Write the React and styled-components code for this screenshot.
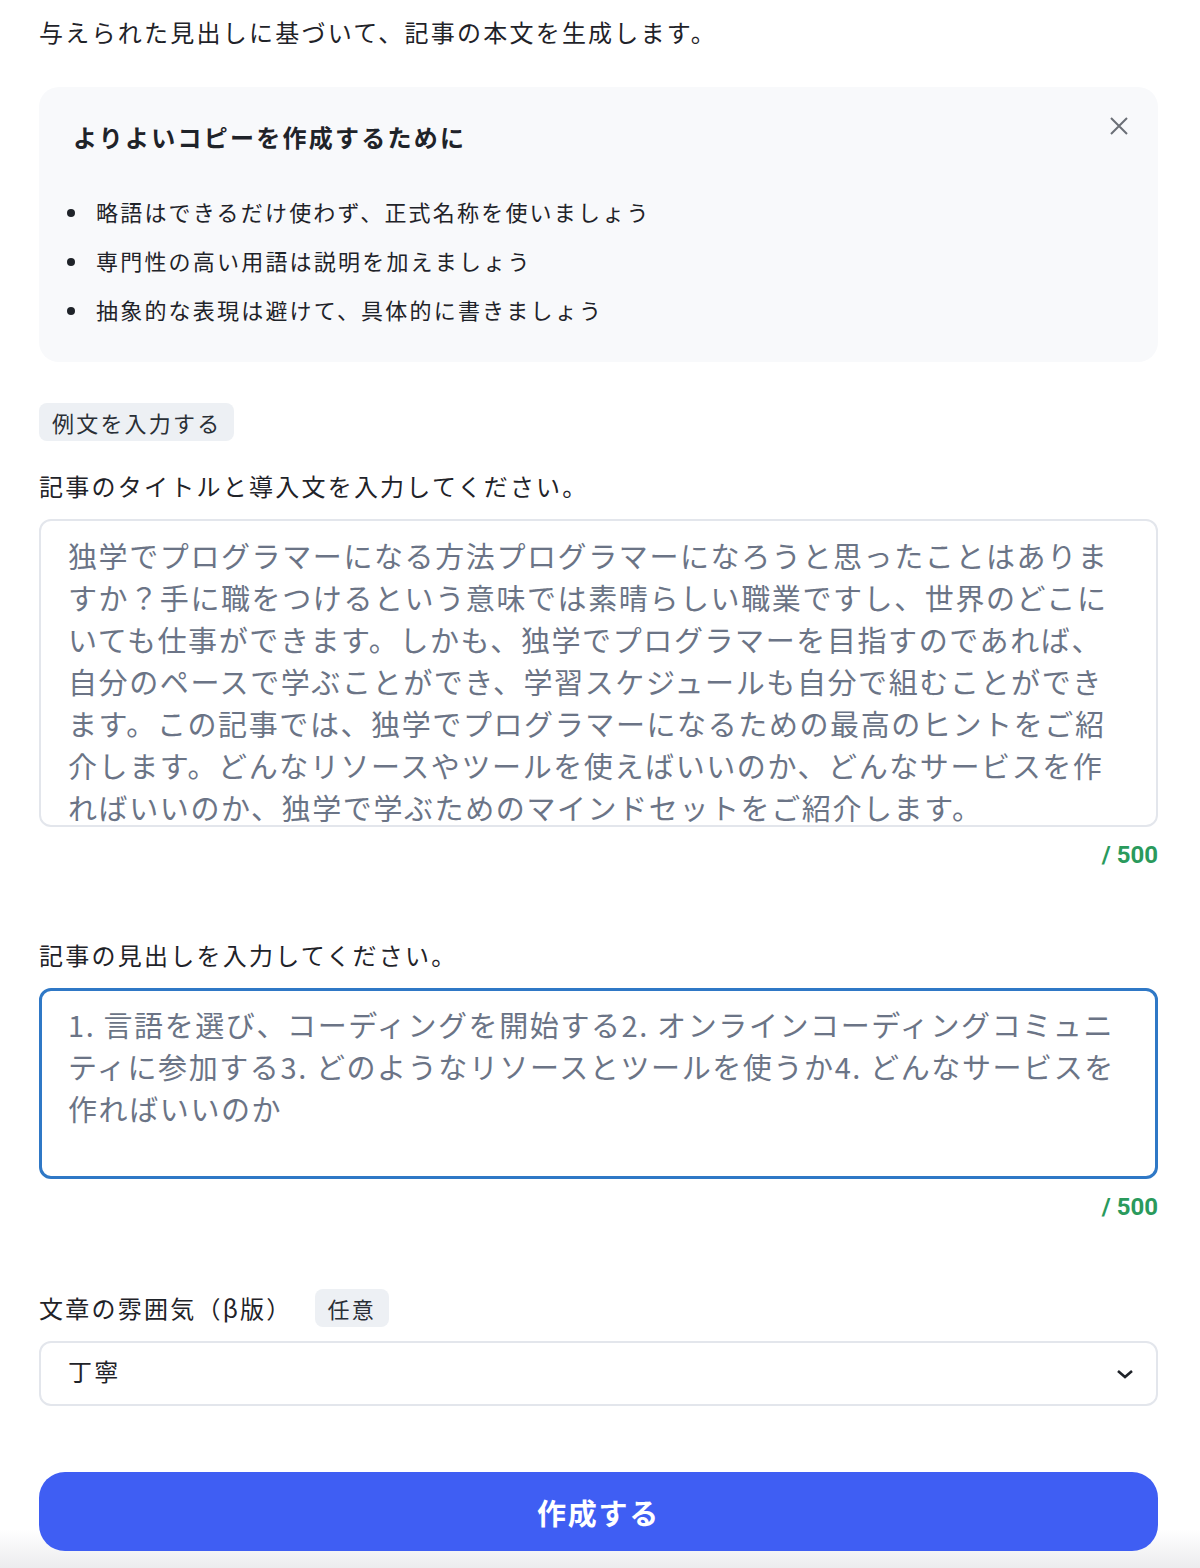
import React, { useState } from 'react';
import styled, { createGlobalStyle } from 'styled-components';

const GlobalStyle = createGlobalStyle`
  * { box-sizing: border-box; }
  body {
    margin: 0;
    background: #fff;
    font-family: "Noto Sans CJK JP", "Noto Sans", sans-serif;
    color: #1f2329;
    letter-spacing: 0.14em;
  }
`;

const Page = styled.div`
  padding: 14px 42px 0 39px;
  display: flex;
  flex-direction: column;
  min-height: 1568px;
  background: linear-gradient(to bottom, #fff 0, #fff 1530px, #ececee 1568px);
`;

const Lead = styled.p`
  margin: 0;
  font-size: 24px;
  line-height: 36px;
`;

const TipCard = styled.section`
  position: relative;
  margin-top: 37px;
  background: #f8f9fb;
  border-radius: 20px;
  padding: 30px 34px 28px 34px;
`;

const TipTitle = styled.h2`
  margin: 0;
  font-size: 24px;
  font-weight: 700;
  line-height: 40px;
`;

const CloseButton = styled.button`
  position: absolute;
  right: 23px;
  top: 23px;
  width: 32px;
  height: 32px;
  padding: 0;
  border: none;
  background: transparent;
  display: flex;
  align-items: center;
  justify-content: center;
  cursor: pointer;
`;

const TipList = styled.ul`
  margin: 30px 0 0 0;
  padding: 0 0 0 23px;
  list-style: none;
`;

const TipItem = styled.li`
  position: relative;
  font-size: 22px;
  line-height: 49px;
  letter-spacing: 2.2px;
  &::before {
    content: '';
    position: absolute;
    left: -29px;
    top: 22px;
    width: 8px;
    height: 8px;
    border-radius: 50%;
    background: #1f2329;
  }
`;

const Tag = styled.span`
  display: inline-flex;
  align-items: center;
  height: 38px;
  padding: 0 13px;
  border-radius: 8px;
  background: #edf0f4;
  font-size: 22px;
  color: #2a2f36;
  letter-spacing: 0.1em;
`;

const ExampleRow = styled.div`
  margin-top: 41px;
`;

const Label = styled.label`
  display: flex;
  align-items: center;
  gap: 22px;
  font-size: 24px;
  line-height: 36px;
  margin-top: ${p => p.$top}px;
  margin-bottom: ${p => p.$bottom}px;
`;

const TextArea = styled.textarea`
  display: block;
  width: 100%;
  height: ${p => p.$height}px;
  resize: none;
  border: ${p => (p.$focused ? '3px solid #2f78c6' : '2px solid #e3e6ec')};
  border-radius: 12px;
  padding: ${p => (p.$focused ? '12px 26px' : '13px 27px')};
  font-family: "Noto Sans CJK JP", "Noto Sans", sans-serif;
  font-size: 29px;
  letter-spacing: 1.6px;
  line-height: 42px;
  color: #6b7486;
  background: #fff;
  outline: none;
  overflow: hidden;
`;

const Counter = styled.div`
  text-align: right;
  margin-top: 14px;
  font-family: Roboto, "Noto Sans", sans-serif;
  font-weight: 700;
  font-size: 24px;
  letter-spacing: 0;
  color: #2a9a5c;
  line-height: 28px;
`;

const SelectBox = styled.div`
  display: flex;
  align-items: center;
  justify-content: space-between;
  height: 65px;
  border: 2px solid #e3e6ec;
  border-radius: 12px;
  padding: 0 22px 0 27px;
  font-size: 24px;
  line-height: 30px;
  & > span {
    margin-top: -5px;
  }
`;

const SubmitButton = styled.button`
  margin-top: 66px;
  height: 79px;
  width: 100%;
  border: none;
  border-radius: 26px;
  background: #3f5ef3;
  color: #fff;
  font-family: "Noto Sans CJK JP", "Noto Sans", sans-serif;
  font-weight: 700;
  font-size: 29px;
  letter-spacing: 0.06em;
  cursor: pointer;
`;

const intro =
  '独学でプログラマーになる方法プログラマーになろうと思ったことはありますか？手に職をつけるという意味では素晴らしい職業ですし、世界のどこにいても仕事ができます。しかも、独学でプログラマーを目指すのであれば、自分のペースで学ぶことができ、学習スケジュールも自分で組むことができます。この記事では、独学でプログラマーになるための最高のヒントをご紹介します。どんなリソースやツールを使えばいいのか、どんなサービスを作ればいいのか、独学で学ぶためのマインドセットをご紹介します。';

const headings =
  '1. 言語を選び、コーディングを開始する2. オンラインコーディングコミュニティに参加する3. どのようなリソースとツールを使うか4. どんなサービスを作ればいいのか';

export default function App() {
  const [open, setOpen] = useState(true);
  return (
    <>
      <GlobalStyle />
      <Page>
        <Lead>与えられた見出しに基づいて、記事の本文を生成します。</Lead>
        {open && (
          <TipCard>
            <TipTitle>よりよいコピーを作成するために</TipTitle>
            <CloseButton onClick={() => setOpen(false)} aria-label="閉じる">
              <svg width="20" height="20" viewBox="0 0 20 20">
                <path d="M2 2 L18 18 M18 2 L2 18" stroke="#6b6f76" strokeWidth="2" fill="none" />
              </svg>
            </CloseButton>
            <TipList>
              <TipItem>略語はできるだけ使わず、正式名称を使いましょう</TipItem>
              <TipItem>専門性の高い用語は説明を加えましょう</TipItem>
              <TipItem>抽象的な表現は避けて、具体的に書きましょう</TipItem>
            </TipList>
          </TipCard>
        )}
        <ExampleRow>
          <Tag>例文を入力する</Tag>
        </ExampleRow>
        <Label $top={27} $bottom={15}>記事のタイトルと導入文を入力してください。</Label>
        <TextArea $height={308} readOnly value={intro} />
        <Counter>/ 500</Counter>
        <Label $top={68} $bottom={15}>記事の見出しを入力してください。</Label>
        <TextArea $height={191} $focused readOnly value={headings} />
        <Counter>/ 500</Counter>
        <Label $top={68} $bottom={14}>
          文章の雰囲気（β版）
          <Tag>任意</Tag>
        </Label>
        <SelectBox>
          <span>丁寧</span>
          <svg width="18" height="12" viewBox="0 0 18 12">
            <path d="M2 3 L9 9 L16 3" stroke="#1f2329" strokeWidth="2.6" fill="none" />
          </svg>
        </SelectBox>
        <SubmitButton>作成する</SubmitButton>
      </Page>
    </>
  );
}
